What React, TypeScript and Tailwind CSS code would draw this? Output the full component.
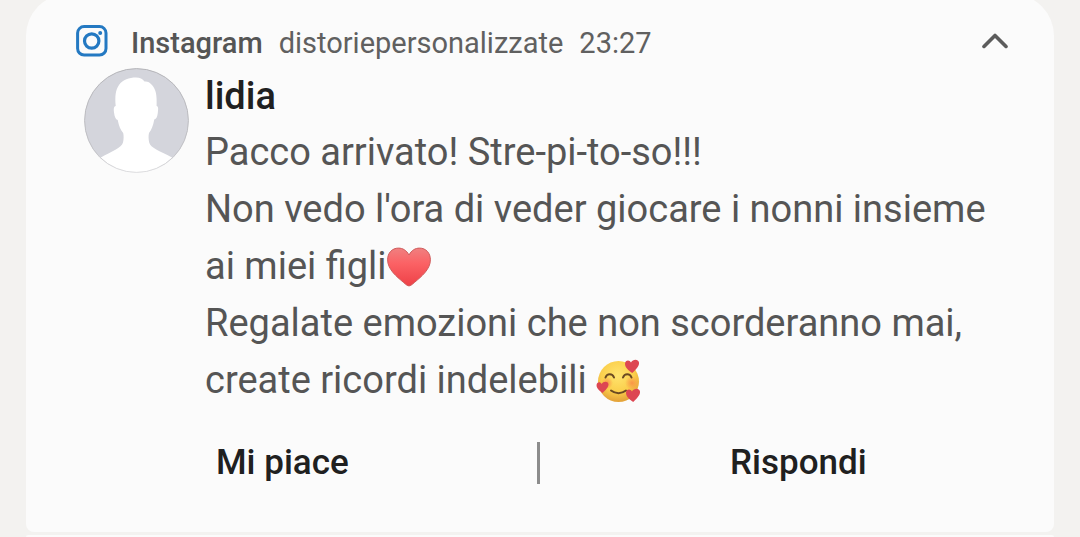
import { useState } from 'react';

interface IconProps {
  className?: string;
}

function InstagramIcon({ className }: IconProps) {
  return (
    <svg viewBox="0 0 32 32" fill="none" stroke="#2479c2" className={className} aria-hidden="true">
      <rect x="1.6" y="1.6" width="28.4" height="28.4" rx="6.5" strokeWidth="3" />
      <circle cx="15.7" cy="16" r="7.2" strokeWidth="3.2" />
      <circle cx="24.2" cy="8" r="2" fill="#2479c2" stroke="none" />
    </svg>
  );
}

function ChevronUpIcon({ className }: IconProps) {
  return (
    <svg viewBox="0 0 28 16" fill="none" stroke="#5c5c5c" strokeWidth="3.6" strokeLinecap="round" strokeLinejoin="round" className={className} aria-hidden="true">
      <path d="M3 13.4 14 2.4l11 11" />
    </svg>
  );
}

function Avatar({ className }: IconProps) {
  return (
    <svg viewBox="0 0 105 105" className={className} role="img" aria-label="lidia">
      <defs>
        <clipPath id="avatar-clip">
          <circle cx="52.5" cy="52.5" r="52" />
        </clipPath>
        <linearGradient id="avatar-ring" x1="0" y1="0" x2="0" y2="1">
          <stop offset="0" stopColor="#b4b4b8" />
          <stop offset="0.8" stopColor="#c2c2c6" />
          <stop offset="1" stopColor="#dedee0" />
        </linearGradient>
      </defs>
      <g clipPath="url(#avatar-clip)">
        <rect width="105" height="105" fill="#d4d5dc" />
        <path
          fill="#fff"
          d="M52 9.5c4 0 6.500 1.500 8.500 4 2.500-.5 5 .5 7.500 3.500 4 4.500 5 10 4.600 21 2 .6 1.700 3 1.200 7-.5 3.500-1.400 6-3.500 6.500C69 58 67.500 62 65 65c-.7 3-.5 6 .2 9.500 1.300 5.500 10 8 22.800 15V105H16V90c12-7 21.500-10 23-15.500.8-3.500.8-6.500.2-9.500-2.700-3-4.200-7-5.500-13-2.200-.6-3.200-3.500-3.600-7-.5-4-.6-6.500 1.600-7-.8-10-.2-16 3.300-21 4-5.500 10-7.500 17-7.500z"
        />
      </g>
      <circle cx="52.5" cy="52.5" r="51.9" fill="none" stroke="url(#avatar-ring)" />
    </svg>
  );
}

function HeartEmoji({ className }: IconProps) {
  return (
    <svg viewBox="0 0 44 39" className={className} role="img" aria-label="cuore rosso">
      <defs>
        <linearGradient id="heart-fill" x1="0" y1="0" x2="0" y2="1">
          <stop offset="0" stopColor="#f08080" />
          <stop offset="0.4" stopColor="#fb6265" />
          <stop offset="1" stopColor="#ee4147" />
        </linearGradient>
      </defs>
      <path
        d="M22 7.500C19.500 2.800 15.800.6 11.500.6 5 .6.600 5.500.600 12.300c0 9.500 8.900 16.700 15.900 22.600 2.200 1.900 4 3.500 5.500 3.500s3.300-1.600 5.500-3.500c7-5.900 15.900-13.100 15.900-22.600C43.400 5.500 39 .6 32.500.6 28.200.6 24.500 2.800 22 7.500z"
        fill="url(#heart-fill)"
        stroke="#cf5c5c"
        strokeWidth="1"
      />
    </svg>
  );
}

const smallHeart = 'M-1-3.500C-2.500-6.800-7-6-7-2.200-7 1.800-3.500 4.300.200 7 3.500 4 7.500 0 7-3.400 6.200-7.500.8-7-1-3.500z';

function SmilingHeartsEmoji({ className }: IconProps) {
  return (
    <svg viewBox="0 0 46 44" className={className} role="img" aria-label="faccina con cuori">
      <defs>
        <radialGradient id="face-fill" cx="0.48" cy="0.35" r="0.62">
          <stop offset="0" stopColor="#ffe46e" />
          <stop offset="0.65" stopColor="#fbcf4c" />
          <stop offset="1" stopColor="#e5a53a" />
        </radialGradient>
        <radialGradient id="blush-fill">
          <stop offset="0" stopColor="#f98a46" stopOpacity="0.85" />
          <stop offset="1" stopColor="#f98a46" stopOpacity="0" />
        </radialGradient>
      </defs>
      <circle cx="22.500" cy="22.500" r="20.500" fill="url(#face-fill)" />
      <circle cx="11" cy="24" r="6" fill="url(#blush-fill)" />
      <circle cx="36" cy="24" r="7" fill="url(#blush-fill)" />
      <g fill="none" stroke="#6b4a22" strokeWidth="2" strokeLinecap="round">
        <path d="M9.500 18.500c1.500-4.200 7-4.200 8.500 0" />
        <path d="M27 18.500c1.500-4.200 7-4.200 8.500 0" />
        <path d="M15 31.500c4.500 3.500 10.500 3.500 15 0" />
      </g>
      <g fill="#dd4652">
        <path d={smallHeart} transform="translate(36 7)" />
        <path d={smallHeart} transform="translate(37 36)" />
        <path d={smallHeart} transform="translate(6.500 28) scale(0.85)" />
      </g>
    </svg>
  );
}

export default function App() {
  const [expanded, setExpanded] = useState(true);

  return (
    <div className="flex min-h-screen flex-col overflow-hidden bg-[#f3f2f0] px-[26px] font-['Roboto','Noto_Sans',sans-serif]">
      <article className="-mt-1.5 rounded-t-[42px] rounded-b-lg bg-[#fbfbfb] pt-6 pb-12">
        {/* Header */}
        <header className="flex h-[50px] items-center pr-[45px] pb-1 pl-[50px]">
          <InstagramIcon className="size-8 shrink-0" />
          <div className="ml-[23px] flex gap-4 pt-1 text-[29px] leading-8 text-[#606060]">
            <span className="font-medium text-[#555555]">Instagram</span>
            <span>distoriepersonalizzate</span>
            <time>23:27</time>
          </div>
          <button
            type="button"
            aria-label={expanded ? 'Comprimi' : 'Espandi'}
            aria-expanded={expanded}
            onClick={() => setExpanded(!expanded)}
            className="ml-auto"
          >
            <ChevronUpIcon className={expanded ? 'h-4 w-7' : 'h-4 w-7 rotate-180'} />
          </button>
        </header>

        {/* Message */}
        <div className="flex items-start gap-4 pr-12 pl-[58px]">
          <Avatar className="size-[105px] shrink-0" />
          <div className="min-w-0 flex-1">
            <h1 className="text-[38px] leading-[56px] font-medium text-[#202020]">lidia</h1>
            {expanded && (
              <p className="text-[38px] leading-[57px] text-[#555555]">
                Pacco arrivato! Stre-pi-to-so!!!
                <br />
                Non vedo l'ora di veder giocare i nonni insieme
                <br />
                ai miei figli
                <HeartEmoji className="inline-block h-10 w-11 align-[-8px]" />
                <br />
                Regalate emozioni che non scorderanno mai,
                <br />
                create ricordi indelebili <SmilingHeartsEmoji className="inline-block h-11 w-[46px] align-[-10px]" />
              </p>
            )}
          </div>
        </div>

        {/* Actions */}
        <div className="mt-[33px] grid grid-cols-2 text-[35px] leading-[42px] font-medium text-[#202020]">
          <button type="button" className="border-r-3 border-[#8c8c8c] pl-[190px] text-left">
            Mi piace
          </button>
          <button type="button" className="pl-[190px] text-left">
            Rispondi
          </button>
        </div>
      </article>

      {/* Next notification in the list */}
      <div className="mt-[3px] flex-1 rounded-t-lg bg-[#fbfbfb]" />
    </div>
  );
}
